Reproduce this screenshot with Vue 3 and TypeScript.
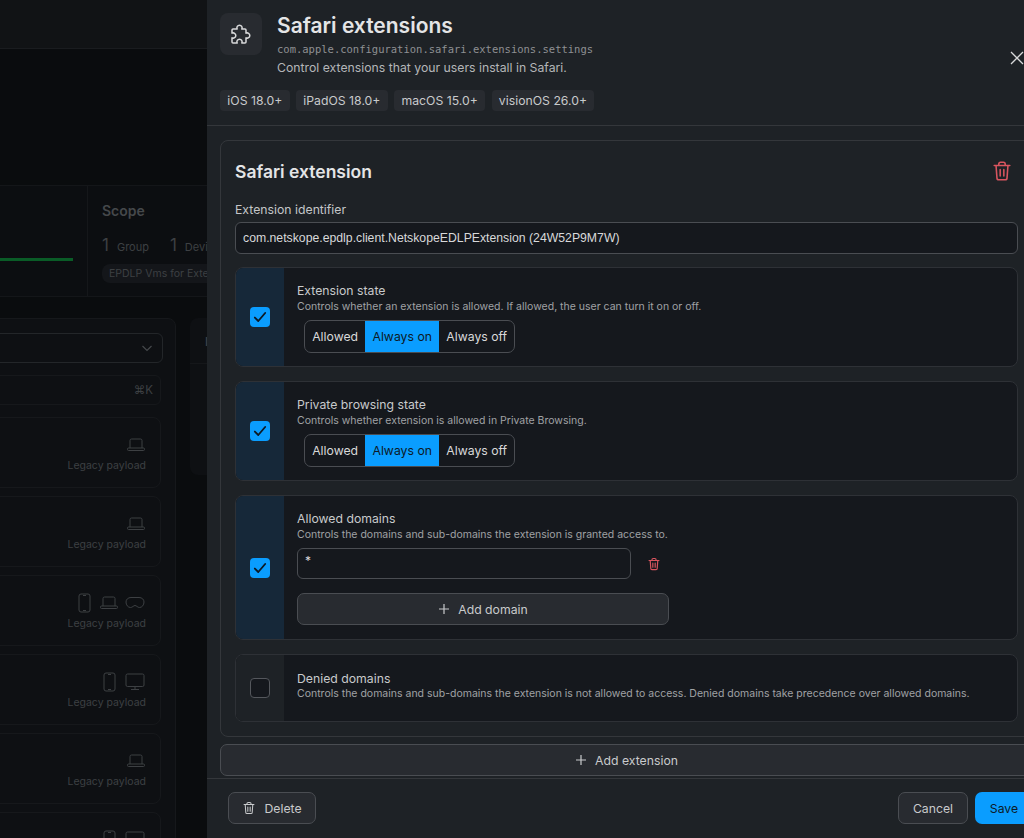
<script setup lang="ts">
type Device = 'phone' | 'laptop' | 'vision' | 'monitor'

const payloads: Device[][] = [
  ['laptop'],
  ['laptop'],
  ['phone', 'laptop', 'vision'],
  ['phone', 'monitor'],
  ['laptop'],
  ['phone', 'monitor'],
]

const tags = ['iOS 18.0+', 'iPadOS 18.0+', 'macOS 15.0+', 'visionOS 26.0+']
const segments = ['Allowed', 'Always on', 'Always off']

const segmentRows = [
  {
    title: 'Extension state',
    desc: 'Controls whether an extension is allowed. If allowed, the user can turn it on or off.',
  },
  {
    title: 'Private browsing state',
    desc: 'Controls whether extension is allowed in Private Browsing.',
  },
]
</script>

<template>
  <div class="screen">
    <div class="page">
      <div class="topbar"></div>
      <div class="hero"></div>
      <div class="stats">
        <div class="stat-progress"><div class="bar"></div></div>
        <div class="stat-scope">
          <h3>Scope</h3>
          <div class="counts">
            <b>1</b><span>Group</span>
            <b>1</b><span>Devices</span>
          </div>
          <div class="chip">EPDLP Vms for Extensions</div>
        </div>
      </div>
      <div class="content">
        <div class="list">
          <div class="select">
            <svg width="14" height="14" viewBox="0 0 14 14" fill="none" stroke="currentColor" stroke-width="1.2">
              <path d="M2.5 5l4.5 4.5L11.5 5" />
            </svg>
          </div>
          <div class="search">⌘K</div>
          <div v-for="(devices, i) in payloads" :key="i" class="payload">
            <div class="devices">
              <template v-for="(d, j) in devices" :key="j">
                <svg v-if="d === 'phone'" class="phone" width="13" height="20" viewBox="0 0 13 20" fill="none" stroke="currentColor">
                  <rect x="1" y="1" width="11" height="18" rx="2" />
                  <path d="M5 2.5h3M5 17.5h3" />
                </svg>
                <svg v-else-if="d === 'laptop'" width="18" height="14" viewBox="0 0 18 14" fill="none" stroke="currentColor">
                  <path d="M3 10V2.5A1.5 1.5 0 0 1 4.500 1h9A1.500 1.500 0 0 1 15 2.500V10" />
                  <rect x="0.500" y="10" width="17" height="2.500" rx="1" />
                </svg>
                <svg v-else-if="d === 'vision'" width="20" height="14" viewBox="0 0 20 14" fill="none" stroke="currentColor">
                  <path d="M6 1.500h8c3 0 5 2 5 4.500 0 3-2 5.500-4.500 5.500-2 0-3-2-4.500-2s-2.500 2-4.500 2C3 11.500 1 9 1 6c0-2.500 2-4.500 5-4.500z" />
                </svg>
                <svg v-else width="20" height="18" viewBox="0 0 20 18" fill="none" stroke="currentColor">
                  <rect x="1" y="1" width="18" height="12.500" rx="1.500" />
                  <path d="M10 13.500V16M6 16.500h8" />
                </svg>
              </template>
            </div>
            <span v-if="i < payloads.length - 1">Legacy payload</span>
          </div>
        </div>
        <div class="aside"><div class="aside-head">Details</div></div>
      </div>
    </div>

    <aside class="panel">
      <header class="panel-head">
        <div class="head-top">
          <div class="head-icon">
            <svg width="24" height="24" viewBox="0 0 24 24" fill="none" stroke="currentColor" stroke-width="1.500" stroke-linejoin="round">
              <path d="M4 7h4.200a2.600 2.600 0 1 1 4.600 0H16a1 1 0 0 1 1 1v3.200a2.600 2.600 0 1 1 0 4.600V20a1 1 0 0 1-1 1h-3.200a2.600 2.600 0 1 0-4.600 0H4a1 1 0 0 1-1-1v-4.200a2.600 2.600 0 1 0 0-4.600V8a1 1 0 0 1 1-1z" />
            </svg>
          </div>
          <div class="head-text">
            <h1>Safari extensions</h1>
            <code>com.apple.configuration.safari.extensions.settings</code>
            <p>Control extensions that your users install in Safari.</p>
          </div>
          <button class="close" aria-label="Close">
            <svg width="14" height="14" viewBox="0 0 14 14" fill="none" stroke="currentColor" stroke-width="1.300">
              <path d="M1 1l12 12M13 1L1 13" />
            </svg>
          </button>
        </div>
        <div class="tags">
          <span v-for="tag in tags" :key="tag" class="tag">{{ tag }}</span>
        </div>
      </header>

      <div class="panel-body">
        <section class="card">
          <div class="card-head">
            <h2>Safari extension</h2>
            <svg class="trash" width="22" height="22" viewBox="0 0 24 24" fill="none" stroke="currentColor" stroke-width="1.700" stroke-linecap="round" stroke-linejoin="round">
              <path d="M3.500 6h17M8.500 6V4.500A2 2 0 0 1 10.500 2.500h3a2 2 0 0 1 2 2V6M5.500 6l1 13.500A2 2 0 0 0 8.500 21.500h7a2 2 0 0 0 2-2L18.500 6M10 10.500v7M14 10.500v7" />
            </svg>
          </div>
          <label class="field-label">Extension identifier</label>
          <div class="input identifier">com.netskope.epdlp.client.NetskopeEDLPExtension (24W52P9M7W)</div>

          <div v-for="row in segmentRows" :key="row.title" class="row on">
            <div class="row-check">
              <span class="checkbox checked">
                <svg width="16" height="16" viewBox="0 0 14 14" fill="none" stroke="currentColor" stroke-width="1.600" stroke-linecap="round" stroke-linejoin="round">
                  <path d="M2.500 7.500l3 3 6-7" />
                </svg>
              </span>
            </div>
            <div class="row-body">
              <h4>{{ row.title }}</h4>
              <p>{{ row.desc }}</p>
              <div class="segmented">
                <span v-for="s in segments" :key="s" :class="{ active: s === 'Always on' }">{{ s }}</span>
              </div>
            </div>
          </div>

          <div class="row on">
            <div class="row-check">
              <span class="checkbox checked">
                <svg width="16" height="16" viewBox="0 0 14 14" fill="none" stroke="currentColor" stroke-width="1.600" stroke-linecap="round" stroke-linejoin="round">
                  <path d="M2.500 7.500l3 3 6-7" />
                </svg>
              </span>
            </div>
            <div class="row-body">
              <h4>Allowed domains</h4>
              <p>Controls the domains and sub-domains the extension is granted access to.</p>
              <div class="domain">
                <div class="input domain-input">*</div>
                <svg class="trash" width="14" height="14" viewBox="0 0 24 24" fill="none" stroke="currentColor" stroke-width="2" stroke-linecap="round" stroke-linejoin="round">
                  <path d="M3.500 6h17M8.500 6V4.500A2 2 0 0 1 10.500 2.500h3a2 2 0 0 1 2 2V6M5.500 6l1 13.500A2 2 0 0 0 8.500 21.500h7a2 2 0 0 0 2-2L18.500 6M10 10.500v7M14 10.500v7" />
                </svg>
              </div>
              <button class="btn add-domain">
                <svg width="12" height="12" viewBox="0 0 12 12" fill="none" stroke="currentColor" stroke-width="1.200"><path d="M6 1v10M1 6h10" /></svg>
                Add domain
              </button>
            </div>
          </div>

          <div class="row denied">
            <div class="row-check">
              <span class="checkbox"></span>
            </div>
            <div class="row-body">
              <h4>Denied domains</h4>
              <p>Controls the domains and sub-domains the extension is not allowed to access. Denied domains take precedence over allowed domains.</p>
            </div>
          </div>
        </section>

        <button class="btn add-extension">
          <svg width="12" height="12" viewBox="0 0 12 12" fill="none" stroke="currentColor" stroke-width="1.200"><path d="M6 1v10M1 6h10" /></svg>
          Add extension
        </button>
      </div>

      <footer class="panel-foot">
        <button class="btn foot-btn delete">
          <svg width="14" height="14" viewBox="0 0 24 24" fill="none" stroke="currentColor" stroke-width="1.800" stroke-linecap="round" stroke-linejoin="round">
            <path d="M3.500 6h17M8.500 6V4.500A2 2 0 0 1 10.500 2.500h3a2 2 0 0 1 2 2V6M5.500 6l1 13.500A2 2 0 0 0 8.500 21.500h7a2 2 0 0 0 2-2L18.500 6M10 10.500v7M14 10.500v7" />
          </svg>
          Delete
        </button>
        <div class="foot-right">
          <button class="btn foot-btn cancel">Cancel</button>
          <button class="btn foot-btn save">Save</button>
        </div>
      </footer>
    </aside>
  </div>
</template>

<style scoped>
.screen {
  position: relative;
  width: 1024px;
  height: 838px;
  overflow: hidden;
  background: #0a0c0e;
  font-family: Inter, "Liberation Sans", sans-serif;
  color: #c8cacc;
}

button {
  font-family: inherit;
  cursor: pointer;
}

h1, h2, h3, h4, p {
  margin: 0;
}

/* dimmed page behind the drawer */
.page {
  display: flex;
  flex-direction: column;
  height: 838px;
  color: #3d4043;
}

.topbar {
  height: 48px;
  flex: none;
  background: #111315;
  border-bottom: 1px solid #1a1c1f;
}

.hero {
  height: 136px;
  flex: none;
  border-bottom: 1px solid #141619;
}

.stats {
  display: flex;
  height: 110px;
  flex: none;
  background: #0c0e11;
  border-bottom: 1px solid #141619;
}

.stat-progress {
  width: 87px;
  flex: none;
  border-right: 1px solid #15171a;
}

.bar {
  width: 73px;
  height: 3px;
  margin-top: 72px;
  background: #0a5c27;
}

.stat-scope {
  padding: 16px 0 0 14px;
  white-space: nowrap;
}

.stat-scope h3 {
  font-size: 14px;
  font-weight: 600;
  line-height: 17px;
  color: #45484b;
}

.counts {
  display: flex;
  align-items: baseline;
  margin-top: 16px;
  font-size: 11px;
  line-height: 20px;
}

.counts b {
  margin-right: 8px;
  font-size: 17px;
  font-weight: 400;
}

.counts span {
  margin-right: 21px;
}

.chip {
  width: 130px;
  margin-top: 7px;
  padding: 0 7px;
  border-radius: 8px;
  background: #14161a;
  font-size: 10.500px;
  line-height: 19px;
}

.content {
  display: flex;
  align-items: flex-start;
  gap: 14px;
  padding-top: 21px;
  margin-left: -40px;
}

.list {
  display: flex;
  flex-direction: column;
  gap: 12px;
  width: 216px;
  flex: none;
  padding: 14px 13px 0 13px;
  box-sizing: border-box;
  height: 540px;
  background: #0e1013;
  border: 1px solid #16181b;
  border-radius: 8px 8px 0 0;
}

.select {
  display: flex;
  align-items: center;
  justify-content: flex-end;
  height: 30px;
  padding-right: 8px;
  border: 1px solid #232629;
  border-radius: 6px;
  color: #45484b;
  flex: none;
  box-sizing: border-box;
  margin-right: -1px;
}

.search {
  display: flex;
  align-items: center;
  justify-content: flex-end;
  height: 30px;
  flex: none;
  box-sizing: border-box;
  padding-right: 7px;
  border: 1px solid #16181b;
  border-radius: 6px;
  font-size: 11.500px;
  margin-right: 1px;
}

.payload {
  display: flex;
  flex-direction: column;
  align-items: flex-end;
  gap: 4px;
  flex: none;
  height: 71px;
  box-sizing: border-box;
  padding: 17px 14px 0 0;
  border: 1px solid #16181b;
  border-radius: 8px;
  font-size: 10.500px;
  line-height: 13px;
  margin-top: -4px;
  margin-right: 1px;
}

.payload:nth-child(3) {
  margin-top: 0;
}

.devices {
  display: flex;
  align-items: center;
  gap: 7px;
  height: 20px;
  margin-right: 1px;
}

.phone {
  margin-right: 2px;
}

.aside {
  width: 200px;
  height: 157px;
  flex: none;
  background: #0e1013;
  border-radius: 8px;
}

.aside-head {
  height: 46px;
  box-sizing: border-box;
  padding: 16px 0 0 15px;
  border-bottom: 1px solid #15171a;
  font-size: 12.250px;
  font-weight: 600;
  line-height: 15px;
}

/* drawer */
.panel {
  position: absolute;
  top: 0;
  left: 207px;
  bottom: 0;
  width: 840px;
  display: flex;
  flex-direction: column;
  background: #1e2226;
}

.panel-head {
  height: 126px;
  flex: none;
  box-sizing: border-box;
  padding: 13px 13px 0;
  border-bottom: 1px solid #34373b;
}

.head-top {
  position: relative;
  display: flex;
  gap: 15px;
}

.head-icon {
  display: flex;
  align-items: center;
  justify-content: center;
  width: 42px;
  height: 42px;
  flex: none;
  border-radius: 8px;
  background: #282b30;
  color: #d8d9da;
}

.head-text h1 {
  margin-top: 1px;
  font-size: 21px;
  font-weight: 600;
  line-height: 24px;
  color: #e4e5e6;
}

.head-text code {
  display: block;
  margin-top: 4px;
  font-family: "DejaVu Sans Mono", monospace;
  font-size: 10.500px;
  line-height: 14px;
  color: #8e9093;
}

.head-text p {
  margin-top: 4px;
  font-size: 12.250px;
  line-height: 16px;
  color: #b4b6b8;
}

.close {
  position: absolute;
  top: 38px;
  left: 790px;
  padding: 0;
  display: flex;
  background: none;
  border: 0;
  color: #d8d9da;
}

.tags {
  display: flex;
  gap: 6.400px;
  margin-top: 14px;
}

.tag {
  padding: 0 7.300px;
  border-radius: 4px;
  background: #282b30;
  font-size: 12.250px;
  line-height: 21px;
  color: #c8cacc;
}

.panel-body {
  flex: 1;
  min-height: 0;
  padding: 14px 13px 0;
}

.card {
  display: flex;
  flex-direction: column;
  box-sizing: border-box;
  height: 597px;
  padding: 0 15px 0 14px;
  border: 1px solid #34373b;
  border-radius: 8px;
}

.card-head {
  display: flex;
  align-items: center;
  justify-content: space-between;
  height: 60px;
  flex: none;
  padding-right: 5px;
}

.card-head h2 {
  font-size: 17.500px;
  font-weight: 600;
  color: #e4e5e6;
}

.trash {
  color: #d9555f;
}

.field-label {
  margin-top: 1px;
  font-size: 12.250px;
  line-height: 16px;
  color: #c4c6c8;
}

.input {
  box-sizing: border-box;
  border: 1px solid #4a4d52;
  border-radius: 6px;
  background: #15181d;
  color: #d8d9da;
}

.identifier {
  height: 32px;
  margin-top: 4px;
  margin-bottom: 13px;
  padding-left: 7px;
  font-family: "Liberation Sans", Arial, sans-serif;
  font-size: 12.250px;
  line-height: 30px;
  flex: none;
}

.row {
  display: flex;
  flex: none;
  margin-bottom: 14px;
  overflow: hidden;
  border: 1px solid #2e3136;
  border-radius: 8px;
  background: #15181d;
}

.row-check {
  display: flex;
  align-items: center;
  justify-content: center;
  width: 48px;
  flex: none;
  background: #1e2226;
}

.row.on .row-check {
  background: #162839;
}

.checkbox {
  display: flex;
  align-items: center;
  justify-content: center;
  width: 20px;
  height: 20px;
  box-sizing: border-box;
  border: 1px solid #54575c;
  border-radius: 4px;
  background: #15181d;
}

.checkbox.checked {
  border: 0;
  background: #0a9dff;
  color: #0d1a26;
}

.row-body {
  flex: 1;
  padding: 15px 13px 13px;
}

.row-body:has(.add-domain) {
  padding-bottom: 14px;
}

.row.denied {
  height: 68px;
  box-sizing: border-box;
}

.row.denied .row-body {
  padding-top: 16px;
}

.row.denied .row-body p {
  margin-top: 0;
}

.row-body h4 {
  font-size: 12.250px;
  font-weight: 400;
  line-height: 16px;
  color: #c8cacc;
}

.row-body p {
  margin-top: 1px;
  font-size: 10.500px;
  line-height: 14px;
  color: #a0a2a5;
}

.segmented {
  display: inline-flex;
  margin: 6px 0 0 7px;
  height: 33px;
  overflow: hidden;
  box-sizing: border-box;
  border: 1px solid #4a4d52;
  border-radius: 7px;
}

.segmented span {
  display: flex;
  align-items: center;
  justify-content: center;
  padding: 0 7.170px;
  font-size: 12.250px;
  color: #d8d9da;
}

.segmented span.active {
  background: #0a9dff;
  color: #0d1a26;
}

.domain {
  display: flex;
  align-items: center;
  gap: 16px;
  margin-top: 6px;
}

.domain-input {
  width: 334px;
  height: 31px;
  padding: 2px 7px;
  font-size: 12px;
  line-height: 20px;
}

.btn {
  display: flex;
  align-items: center;
  justify-content: center;
  gap: 8px;
  box-sizing: border-box;
  border: 1px solid #4a4d52;
  border-radius: 7px;
  background: #282b30;
  color: #c8cacc;
  font-size: 12.250px;
}

.add-domain {
  width: 372px;
  height: 32px;
  margin-top: 14px;
}

.add-extension {
  width: 813px;
  height: 32px;
  margin-top: 7px;
}

.panel-foot {
  display: flex;
  align-items: flex-start;
  justify-content: space-between;
  height: 60px;
  flex: none;
  box-sizing: border-box;
  padding: 13px 14px 0 21px;
  border-top: 1px solid #34373b;
}

.foot-right {
  display: flex;
  gap: 7px;
}

.foot-btn {
  height: 32px;
}

.delete {
  width: 88px;
}

.cancel {
  width: 70px;
}

.save {
  width: 58px;
  border: 0;
  background: #0a9dff;
  color: #0d1a26;
}
</style>
